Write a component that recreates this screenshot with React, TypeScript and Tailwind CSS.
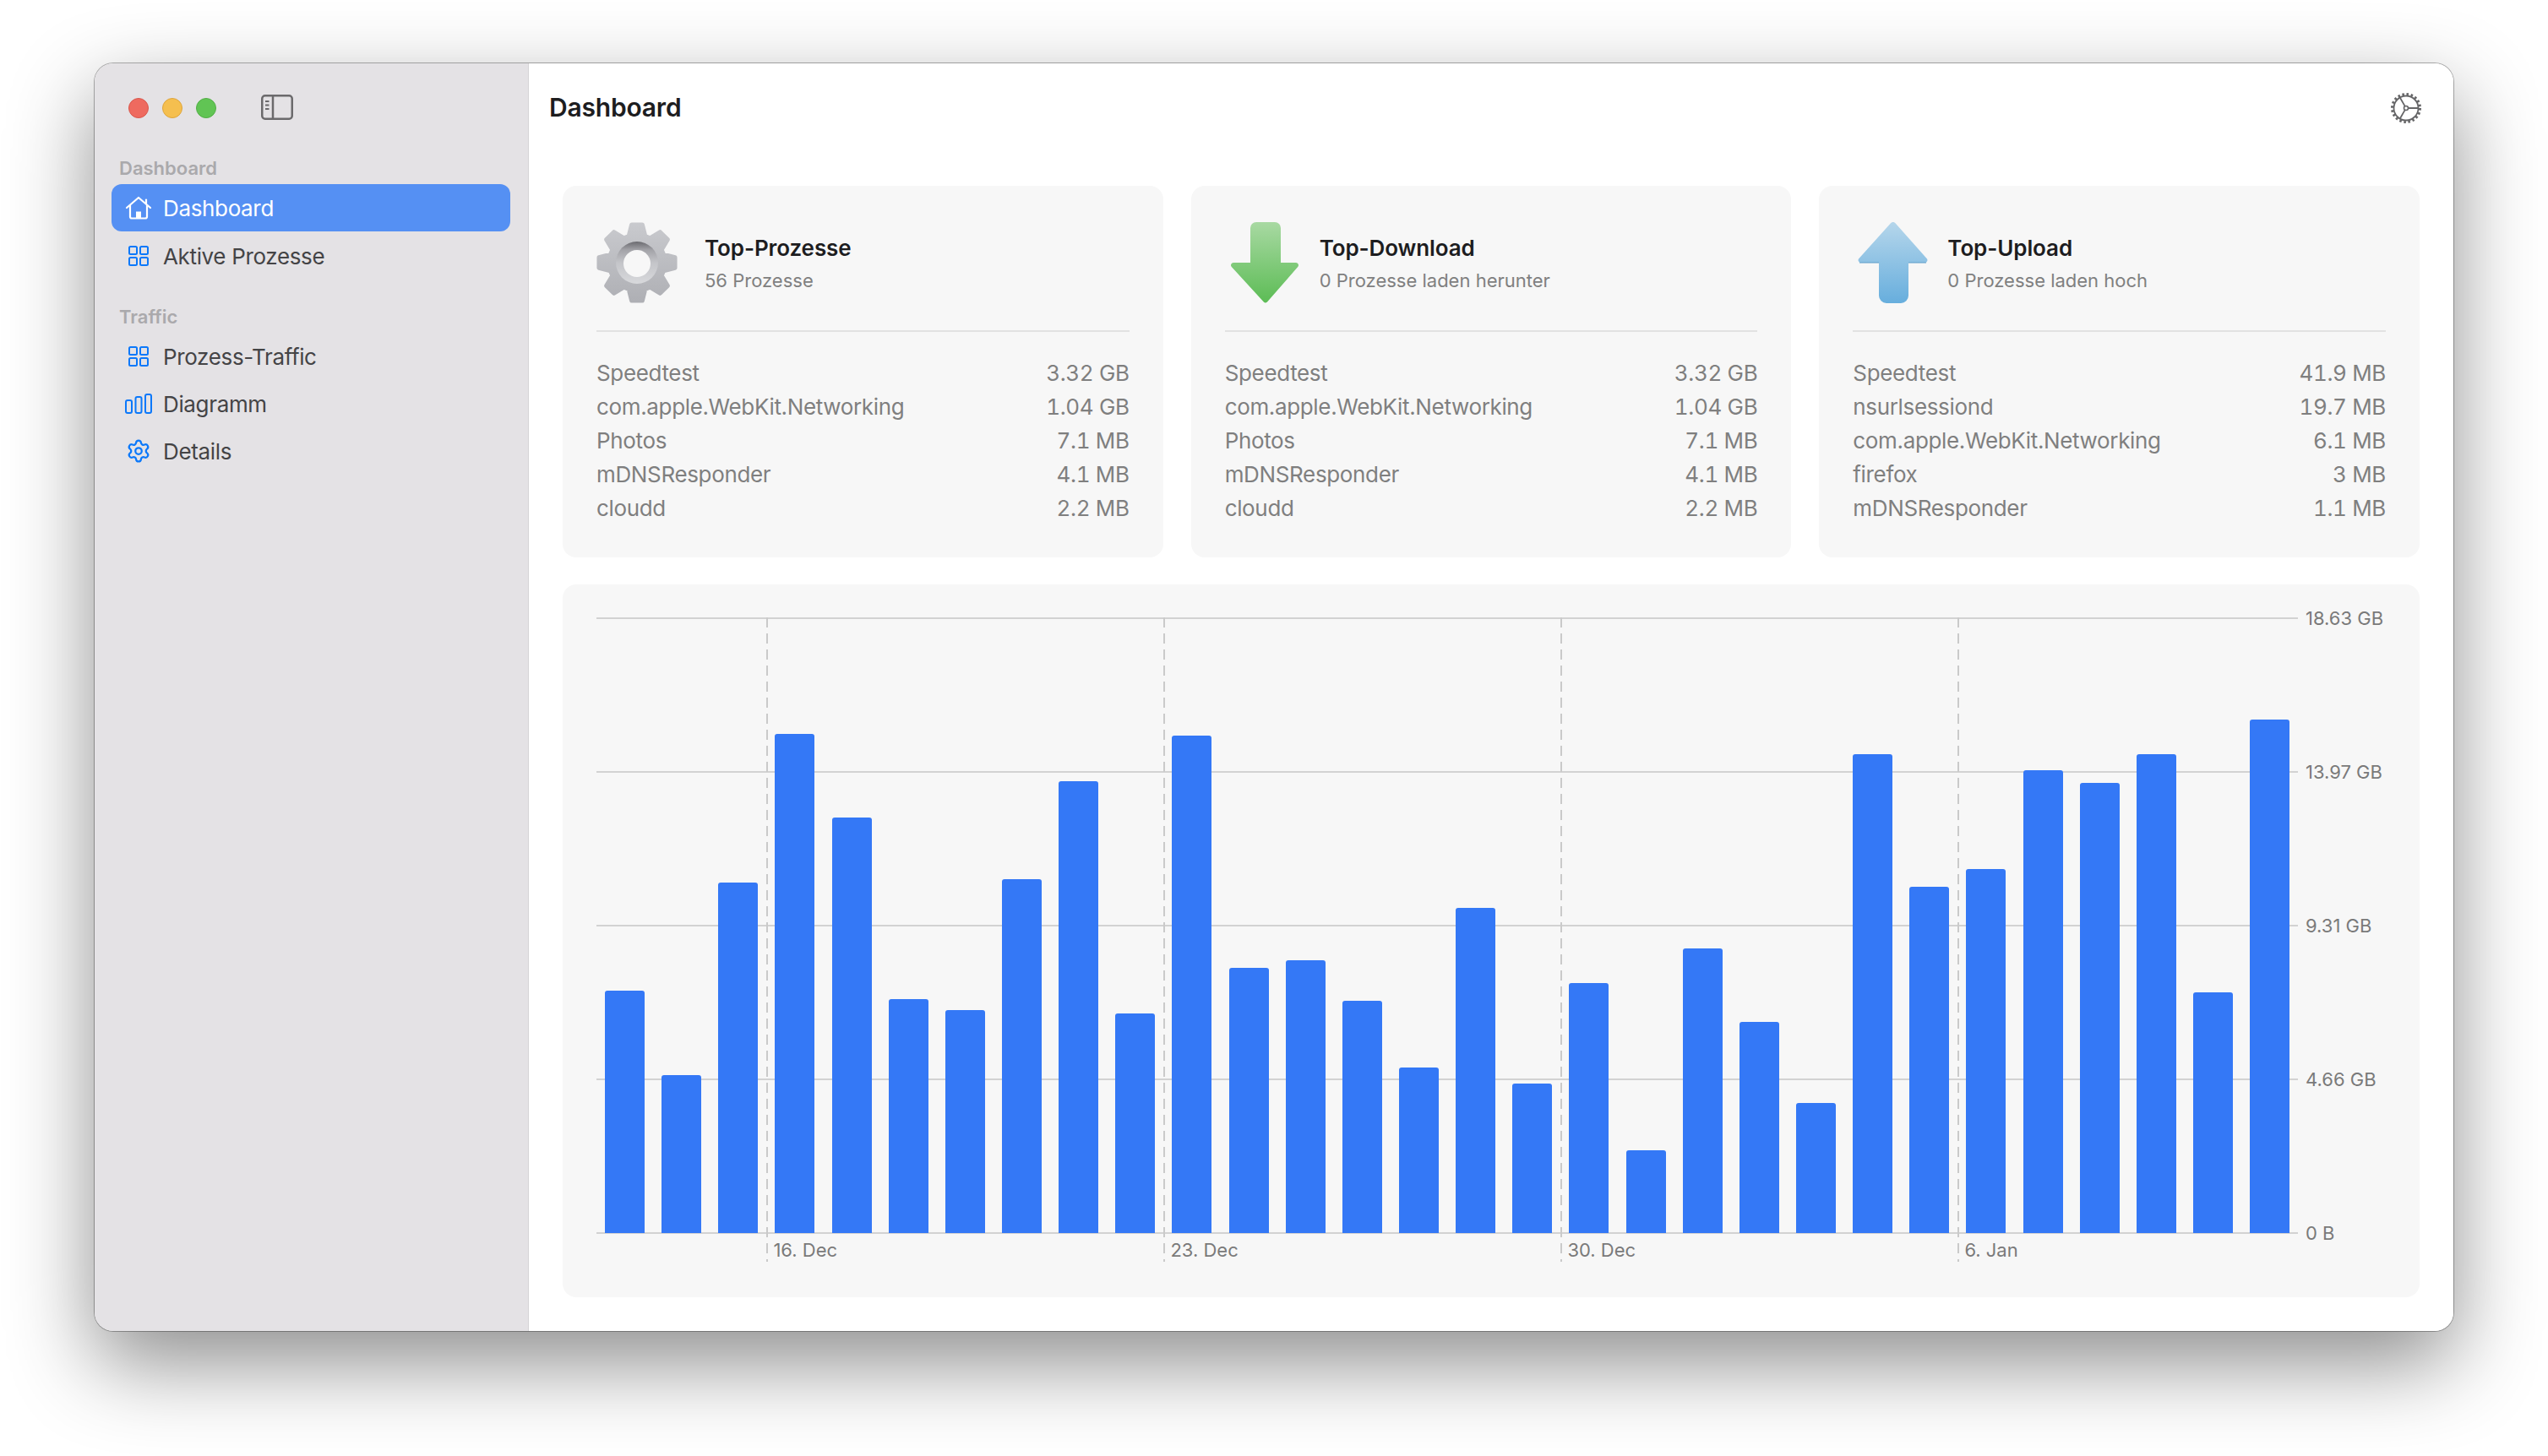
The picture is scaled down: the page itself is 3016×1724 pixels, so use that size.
import React from "react";
import { Settings } from "lucide-react";

const bars = [
  610, 662, 543, 452, 503, 615, 622, 541, 481, 624, 453, 596, 591, 616, 657, 559, 667, 605, 708, 584, 629, 679, 464, 546,
  535, 474, 482, 464, 611, 443,
];

const ticks: Record<number, string> = { 3: "16. Dec", 10: "23. Dec", 17: "30. Dec", 24: "6. Jan" };

const yLabels = ["18.63 GB", "13.97 GB", "9.31 GB", "4.66 GB", "0 B"];

const cards = [
  {
    title: "Top-Prozesse",
    sub: "56 Prozesse",
    icon: "gear",
    rows: [
      ["Speedtest", "3.32 GB"],
      ["com.apple.WebKit.Networking", "1.04 GB"],
      ["Photos", "7.1 MB"],
      ["mDNSResponder", "4.1 MB"],
      ["cloudd", "2.2 MB"],
    ],
  },
  {
    title: "Top-Download",
    sub: "0 Prozesse laden herunter",
    icon: "down",
    rows: [
      ["Speedtest", "3.32 GB"],
      ["com.apple.WebKit.Networking", "1.04 GB"],
      ["Photos", "7.1 MB"],
      ["mDNSResponder", "4.1 MB"],
      ["cloudd", "2.2 MB"],
    ],
  },
  {
    title: "Top-Upload",
    sub: "0 Prozesse laden hoch",
    icon: "up",
    rows: [
      ["Speedtest", "41.9 MB"],
      ["nsurlsessiond", "19.7 MB"],
      ["com.apple.WebKit.Networking", "6.1 MB"],
      ["firefox", "3 MB"],
      ["mDNSResponder", "1.1 MB"],
    ],
  },
];

// 8 tooth gear outline, centre 48/48
function gearPath() {
  const pts: string[] = [];
  for (let i = 0; i < 8; i++) {
    const a = (i * Math.PI) / 4 - Math.PI / 2;
    const list: [number, number][] = [
      [33, a - 0.3],
      [45.5, a - 0.14],
      [45.5, a + 0.14],
      [33, a + 0.3],
    ];
    list.forEach(([r, t]) => pts.push(`${(48 + r * Math.cos(t)).toFixed(2)} ${(48 + r * Math.sin(t)).toFixed(2)}`));
  }
  return "M" + pts.join("L") + "Z";
}

const GearIcon = () => (
  <svg width="96" height="96" viewBox="0 0 96 96">
    <defs>
      <linearGradient id="gearBody" x1="0" y1="0" x2="0" y2="96" gradientUnits="userSpaceOnUse">
        <stop offset="0" stopColor="#c9cace" />
        <stop offset="1" stopColor="#aeafb4" />
      </linearGradient>
      <linearGradient id="gearRing" x1="0" y1="23" x2="0" y2="73" gradientUnits="userSpaceOnUse">
        <stop offset="0" stopColor="#6a6a6f" />
        <stop offset="0.2" stopColor="#a3a3a8" />
        <stop offset="0.5" stopColor="#c4c5c9" />
        <stop offset="1" stopColor="#d8d9dc" />
      </linearGradient>
    </defs>
    <path d={gearPath()} fill="url(#gearBody)" stroke="url(#gearBody)" strokeWidth="5" strokeLinejoin="round" />
    <circle cx="48" cy="48" r="25" fill="url(#gearRing)" />
    <circle cx="48" cy="49" r="16" fill="#f7f7f7" />
  </svg>
);

const DownIcon = () => (
  <svg width="96" height="96" viewBox="0 0 96 96">
    <defs>
      <linearGradient id="downFill" x1="0" y1="0" x2="0" y2="96" gradientUnits="userSpaceOnUse">
        <stop offset="0" stopColor="#a8d9a2" />
        <stop offset="1" stopColor="#5cbc55" />
      </linearGradient>
    </defs>
    <path
      d="M37 0H59a7 7 0 0 1 7 7V48H84a3 3 0 0 1 2.2 5L50 94.500a3 3 0 0 1-4.200 0L7.800 53a3 3 0 0 1 2.200-5H30V7a7 7 0 0 1 7-7Z"
      fill="url(#downFill)"
    />
  </svg>
);

const UpIcon = () => (
  <svg width="96" height="96" viewBox="0 0 96 96">
    <defs>
      <linearGradient id="upFill" x1="0" y1="0" x2="0" y2="96" gradientUnits="userSpaceOnUse">
        <stop offset="0" stopColor="#b5d6eb" />
        <stop offset="1" stopColor="#67aedd" />
      </linearGradient>
    </defs>
    <path
      d="M45 1.200a4 4 0 0 1 5.500 0L88 43.500a3 3 0 0 1-2.200 4.500H66V87a9 9 0 0 1-9 9H40a9 9 0 0 1-9-9V48H9.200A3 3 0 0 1 7 43.500Z"
      fill="url(#upFill)"
    />
    <path d="M8 48H31M66 48H87" stroke="#5d9cc9" strokeWidth="1" />
  </svg>
);

const HomeIcon = () => (
  <svg width="32" height="28" viewBox="0 0 32 28" fill="none" stroke="#fff" strokeWidth="2.2" strokeLinecap="round" strokeLinejoin="round">
    <path d="M2 14 16 2l14 12" />
    <path d="M25 4.500v4.500" />
    <path d="M6 11v13.500a2 2 0 0 0 2 2h16a2 2 0 0 0 2-2V11" />
    <rect x="13" y="18.500" width="6" height="8" fill="#fff" strokeWidth="0" />
  </svg>
);

const GridIcon = () => (
  <svg width="24" height="24" viewBox="0 0 24 24" fill="none" stroke="#0b78fa" strokeWidth="2">
    <rect x="1" y="1" width="9" height="9" rx="1.500" />
    <rect x="14" y="1" width="9" height="9" rx="1.500" />
    <rect x="1" y="14" width="9" height="9" rx="1.500" />
    <rect x="14" y="14" width="9" height="9" rx="1.500" />
  </svg>
);

const ChartIcon = () => (
  <svg width="32" height="24" viewBox="0 0 32 24" fill="none" stroke="#0b78fa" strokeWidth="2">
    <rect x="1" y="8" width="7" height="15" rx="2" />
    <rect x="12.500" y="4" width="7" height="19" rx="2" />
    <rect x="24" y="1" width="7" height="22" rx="2" />
  </svg>
);

const SidebarToggle = () => (
  <svg width="38" height="30" viewBox="0 0 38 30" fill="none" stroke="#6b6a6c" strokeWidth="2.500">
    <rect x="1.250" y="1.250" width="35.500" height="27.500" rx="3.500" />
    <path d="M14 1v28" />
    <path d="M5 8h4.500M5 12.500h4.500M5 17h4.500" strokeWidth="1.800" />
  </svg>
);

// gear with fine teeth and a three spoke wheel
const WheelIcon = () => (
  <svg width="38" height="38" viewBox="0 0 38 38" fill="none" stroke="#666668">
    <circle cx="19" cy="19" r="16.200" strokeWidth="3.600" strokeDasharray="2.500 2.590" />
    <circle cx="19" cy="19" r="14.500" strokeWidth="1.800" />
    <circle cx="19" cy="19" r="2.500" strokeWidth="1.600" />
    <path d="M21.500 19H33M17.750 16.830 11.750 6.450M17.750 21.170 11.750 31.550" strokeWidth="1.800" />
  </svg>
);

const NavRow = ({ icon, label, active }: { icon: React.ReactNode; label: string; active?: boolean }) => (
  <div
    className={
      active
        ? "flex h-[56px] items-center gap-[13px] rounded-[12px] bg-[#5590f3] pl-[16px] text-[26px] tracking-[-0.35px] text-white"
        : "flex h-[56px] items-center gap-[13px] rounded-[12px] pl-[16px] text-[26px] tracking-[-0.35px] text-[#444446]"
    }
  >
    <span className="flex w-[32px] justify-center">{icon}</span>
    <span>{label}</span>
  </div>
);

const SectionLabel = ({ children }: { children: React.ReactNode }) => (
  <div className="ml-[9px] flex h-[37px] items-center text-[22px] font-semibold text-[#aaa9ac]">{children}</div>
);

const Card = ({ card }: { card: (typeof cards)[number] }) => (
  <div className="flex h-[440px] flex-1 flex-col rounded-[16px] bg-[#f7f7f7] px-[40px] pt-[43px]">
    <div className={card.icon === "gear" ? "flex h-[96px] items-center gap-[32px]" : "flex h-[96px] items-center gap-[16px]"}>
      {card.icon === "gear" && <GearIcon />}
      {card.icon === "down" && <DownIcon />}
      {card.icon === "up" && <UpIcon />}
      <div className="mt-[3px]">
        <div className="text-[26px] font-semibold leading-[38px] tracking-[-0.1px] text-[#1d1d1f]">{card.title}</div>
        <div className="text-[22px] leading-[38px] text-[#808080]">{card.sub}</div>
      </div>
    </div>
    <div className="mt-[32px] h-[2px] bg-[#e2e2e2]" />
    <div className="mt-[28px] flex flex-col">
      {card.rows.map(([name, value]) => (
        <div key={name} className="flex h-[40px] items-center justify-between text-[26px] tracking-[-0.35px] text-[#7f7f7f]">
          <span>{name}</span>
          <span className="tabular-nums">{value}</span>
        </div>
      ))}
    </div>
  </div>
);

const Chart = () => (
  <div className="flex h-[844px] rounded-[16px] bg-[#f7f7f7] pl-[40px] pt-[39px]">
    <div className="relative h-[730px] w-[2014px]">
      <div className="absolute inset-0 flex flex-col justify-between">
        {yLabels.map((l) => (
          <div key={l} className="h-[2px] bg-[#d2d2d2]" />
        ))}
      </div>
      <div className="absolute inset-0 flex pb-[1px]">
        {bars.map((top, i) => (
          <div key={i} className="relative flex flex-1 items-end justify-center">
            {ticks[i] && (
              <>
                <div className="absolute bottom-[-34px] left-0 top-0 w-[2px] bg-[repeating-linear-gradient(to_bottom,#cacaca_0,#cacaca_12px,transparent_12px,transparent_19px)]" />
                <span className="absolute bottom-[-35px] left-[8px] whitespace-nowrap text-[22px] leading-[30px] text-[#7a7a7a]">
                  {ticks[i]}
                </span>
              </>
            )}
            <div
              className="w-[47px] rounded-t-[3px] bg-[#3478f6]"
              style={{ height: Math.round((759 - top) * 1.9235) }}
            />
          </div>
        ))}
      </div>
    </div>
    <div className="ml-[9px] mt-[-12px] flex h-[754px] flex-col justify-between text-[22px] leading-[26px] text-[#7a7a7a]">
      {yLabels.map((l) => (
        <span key={l}>{l}</span>
      ))}
    </div>
  </div>
);

export default function App() {
  return (
    <div className="h-[1724px] w-[3016px] overflow-hidden bg-white pl-[112px] pt-[75px] font-['Inter',sans-serif] antialiased">
      <div className="flex h-[1501px] w-[2792px] overflow-hidden rounded-[22px] shadow-[0_0_0_1px_rgba(0,0,0,0.3),0_38px_100px_rgba(0,0,0,0.45)]">
        {/* Sidebar */}
        <aside className="w-[514px] shrink-0 border-r border-[#d6d4d7] bg-[#e4e2e5] pl-[20px] pr-[21px]">
          <div className="flex h-[106px] items-center pl-[20px]">
            <div className="flex gap-[16px]">
              <span className="h-[24px] w-[24px] rounded-full border border-[#d9574c] bg-[#ee6a5f]" />
              <span className="h-[24px] w-[24px] rounded-full border border-[#dea53c] bg-[#f5bf4f]" />
              <span className="h-[24px] w-[24px] rounded-full border border-[#52ae46] bg-[#61c454]" />
            </div>
            <div className="ml-[53px] mt-[-3px] flex">
              <SidebarToggle />
            </div>
          </div>
          <SectionLabel>Dashboard</SectionLabel>
          <div className="flex flex-col gap-px">
            <NavRow active icon={<HomeIcon />} label="Dashboard" />
            <NavRow icon={<GridIcon />} label="Aktive Prozesse" />
          </div>
          <div className="mt-[26px]">
            <SectionLabel>Traffic</SectionLabel>
            <NavRow icon={<GridIcon />} label="Prozess-Traffic" />
            <NavRow icon={<ChartIcon />} label="Diagramm" />
            <NavRow icon={<Settings size={30} color="#0b78fa" strokeWidth={1.8} />} label="Details" />
          </div>
        </aside>

        {/* Main */}
        <main className="flex-1 bg-white">
          <div className="flex h-[106px] items-center justify-between pl-[24px] pr-[37px]">
            <h1 className="mt-[-2px] text-[30px] font-semibold tracking-[-0.2px] text-[#1d1d1f]">Dashboard</h1>
            <WheelIcon />
          </div>
          <div className="mt-[39px] px-[40px]">
            <div className="flex gap-[33px]">
              {cards.map((c) => (
                <Card key={c.title} card={c} />
              ))}
            </div>
            <div className="mt-[32px]">
              <Chart />
            </div>
          </div>
        </main>
      </div>
    </div>
  );
}
